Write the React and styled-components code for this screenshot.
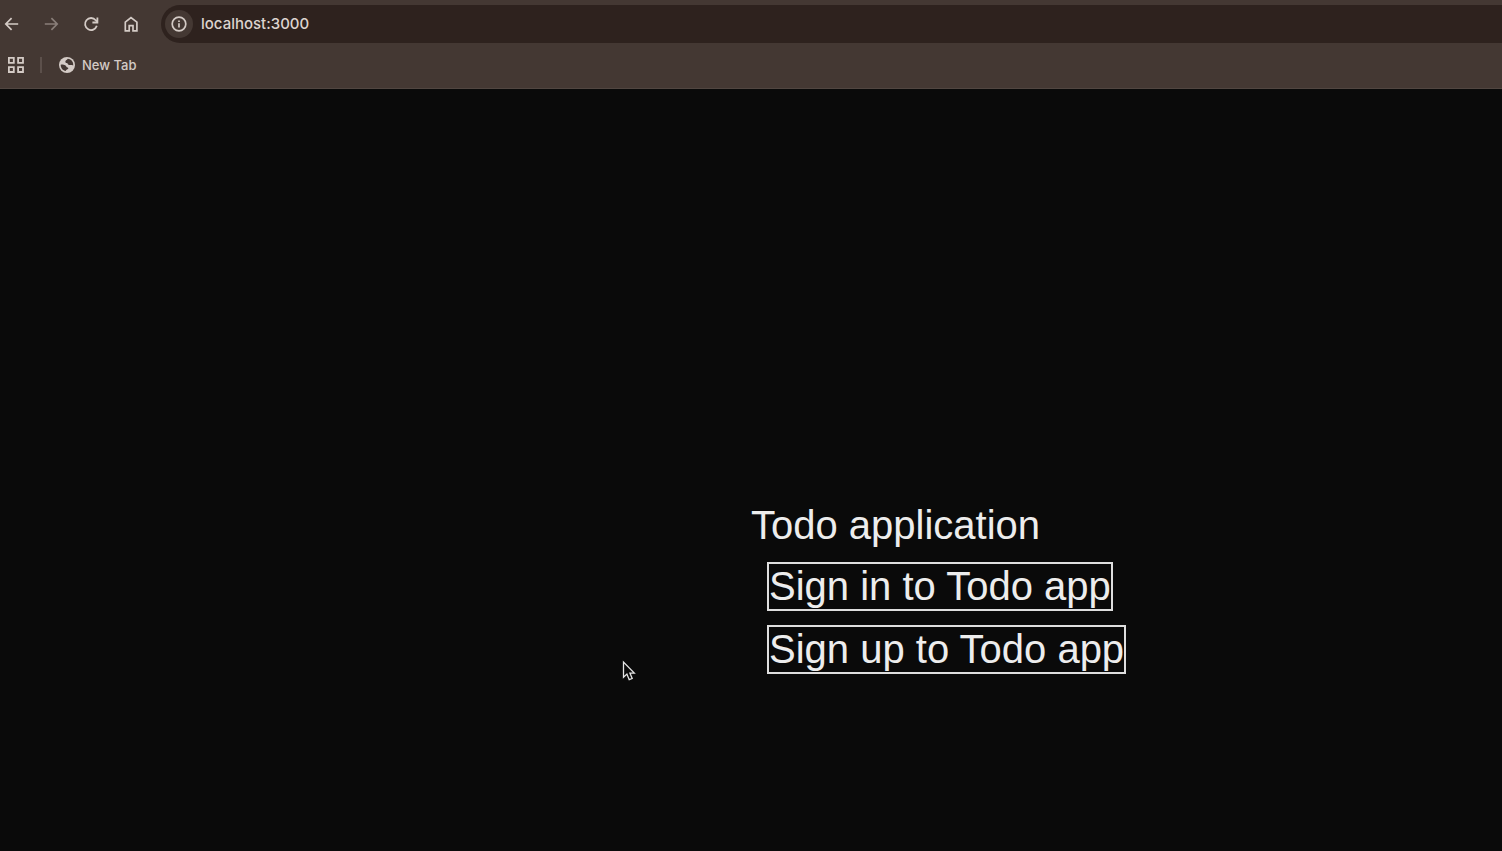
import React from 'react';
import styled, { createGlobalStyle } from 'styled-components';

const GlobalStyle = createGlobalStyle`
  *, *::before, *::after { box-sizing: border-box; }
  body { margin: 0; background: #0a0a0a; }
`;

const Window = styled.div`
  display: flex;
  flex-direction: column;
  min-height: 100vh;
  overflow-x: hidden;
`;

const Chrome = styled.header`
  background: #443833;
  border-bottom: 1px solid #514641;
  color: #d4cbc6;
  font-family: Inter, "Liberation Sans", sans-serif;
`;

const Toolbar = styled.div`
  display: flex;
  align-items: center;
  height: 43px;
  padding-top: 5px;
`;

const Navigation = styled.nav`
  display: flex;
  gap: 20px;
  width: 161px;
  padding-left: 1px;
`;

const IconButton = styled.button`
  display: grid;
  place-items: center;
  width: 20px;
  height: 20px;
  padding: 0;
  border: 0;
  background: none;
  color: #d4cbc6;

  &:disabled { color: #897e79; }
`;

const AddressBar = styled.div`
  display: flex;
  flex: 1;
  align-items: center;
  gap: 8px;
  height: 38px;
  padding-left: 4px;
  border-radius: 19px 0 0 19px;
  background: #2e221e;
`;

const SiteInfo = styled(IconButton)`
  width: 28px;
  height: 28px;
  border-radius: 50%;
  background: #443833;
`;

const AddressInput = styled.input`
  flex: 1;
  min-width: 0;
  padding: 0;
  border: 0;
  outline: 0;
  background: none;
  color: #ddd4cf;
  font: 500 15px/20px Inter, "Liberation Sans", sans-serif;
`;

const Bookmarks = styled.nav`
  display: flex;
  align-items: center;
  height: 45px;
  padding: 0 0 2px 6px;
`;

const Divider = styled.span`
  width: 2px;
  height: 16px;
  margin: 0 17px 0 14px;
  background: #5c504b;
`;

const Bookmark = styled.a`
  display: flex;
  align-items: center;
  gap: 7px;
  color: inherit;
  font-size: 13px;
  font-weight: 500;
  line-height: 20px;
  text-decoration: none;
`;

const Page = styled.main`
  display: flex;
  flex: 1;
  flex-direction: column;
  align-items: flex-start;
  gap: 14px;
  padding: 414px 0 64px 50%;
  color: #ededed;
  font-family: "Liberation Sans", Arial, sans-serif;
  font-size: 40px;
  line-height: 45px;
`;

const Title = styled.h1`
  margin: 0;
  font: inherit;
`;

const ActionLink = styled.a`
  margin-left: 16px;
  border: 2px solid #dedede;
  color: inherit;
  text-decoration: none;
  white-space: nowrap;
`;

const Pointer = styled.svg`
  position: absolute;
  top: 660px;
  left: 622px;
  pointer-events: none;
`;

const Stroke = ({ size = 20, width = 2, children }) => (
  <svg
    width={size}
    height={size}
    viewBox={`0 0 ${size} ${size}`}
    fill="none"
    stroke="currentColor"
    strokeWidth={width}
    aria-hidden="true"
  >
    {children}
  </svg>
);

const BackIcon = () => (
  <Stroke width={1.7}><path d="M17.2 10H5M10.6 4.2 4.8 10l5.8 5.8" /></Stroke>
);

const ForwardIcon = () => (
  <Stroke width={1.7}><path d="M3.8 10H16M10.4 4.2 16.2 10l-5.8 5.8" /></Stroke>
);

const ReloadIcon = () => (
  <Stroke width={1.8}>
    <path d="M15.8 11.8A6 6 0 1 1 14.7 6.2L16.1 7.7" />
    <path d="M16.4 3.5v5h-5" />
  </Stroke>
);

const HomeIcon = () => (
  <Stroke width={1.7}>
    <path d="M4.3 16.9V8.1L10 3.5l5.9 4.6v8.8h-3.9v-5.2H8.2v5.2Z" />
  </Stroke>
);

const InfoIcon = () => (
  <Stroke size={16} width={1.7}>
    <circle cx="8" cy="8" r="6.8" />
    <path d="M8 7.2v4.2M8 4.5v1.6" />
  </Stroke>
);

const AppsIcon = () => (
  <Stroke size={20} width={1.8}>
    <path d="M2.9 2.9h4.9v4.9H2.9ZM12.1 2.9H17v4.9h-4.9ZM2.9 12.1h4.9V17H2.9ZM12.1 12.1H17V17h-4.9Z" />
  </Stroke>
);

const GlobeIcon = () => (
  <svg width="16" height="16" viewBox="0 0 16 16" aria-hidden="true">
    <circle cx="8" cy="8" r="8" fill="#d4cbc6" />
    <path
      d="M8.7 1.7C8.2 3 6.8 3 6.4 4.2c-.3 1 .4 1.7 1.4 1.9 1.1.2 1 1.6 2.1 1.8 1.5.3 2.7-.3 4.3.7.5-3.6-1.8-6.7-5.5-6.9Z"
      fill="#443833"
    />
    <path
      d="M1.7 7.7c1.7-.3 3.2-.2 4.4.5 1.3.7 1.1 2 2.5 2.3.9.2.9 1.2.2 1.6-1 .6-1.8.9-2 2C3.8 13.5 1.6 11 1.7 7.7Z"
      fill="#443833"
    />
  </svg>
);

export default function App() {
  return (
    <Window>
      <GlobalStyle />
      <Chrome>
        <Toolbar>
          <Navigation aria-label="Browser navigation">
            <IconButton aria-label="Back"><BackIcon /></IconButton>
            <IconButton aria-label="Forward" disabled><ForwardIcon /></IconButton>
            <IconButton aria-label="Reload"><ReloadIcon /></IconButton>
            <IconButton aria-label="Home"><HomeIcon /></IconButton>
          </Navigation>
          <AddressBar>
            <SiteInfo aria-label="Site information"><InfoIcon /></SiteInfo>
            <AddressInput aria-label="Address" defaultValue="localhost:3000" />
          </AddressBar>
        </Toolbar>
        <Bookmarks aria-label="Bookmarks">
          <IconButton aria-label="Apps"><AppsIcon /></IconButton>
          <Divider />
          <Bookmark href="#new-tab"><GlobeIcon />New Tab</Bookmark>
        </Bookmarks>
      </Chrome>
      <Page>
        <Title>Todo application</Title>
        <ActionLink href="#sign-in">Sign in to Todo app</ActionLink>
        <ActionLink href="#sign-up">Sign up to Todo app</ActionLink>
      </Page>
      <Pointer width="14" height="22" viewBox="0 0 14 22" aria-hidden="true">
        <path
          d="M1.5 2v15.2l3.4-3.1 2.3 5.6 3-1.2-2.3-5.4h4.4Z"
          fill="#0a0a0a"
          stroke="#e4e4e4"
          strokeWidth="1.3"
        />
      </Pointer>
    </Window>
  );
}
